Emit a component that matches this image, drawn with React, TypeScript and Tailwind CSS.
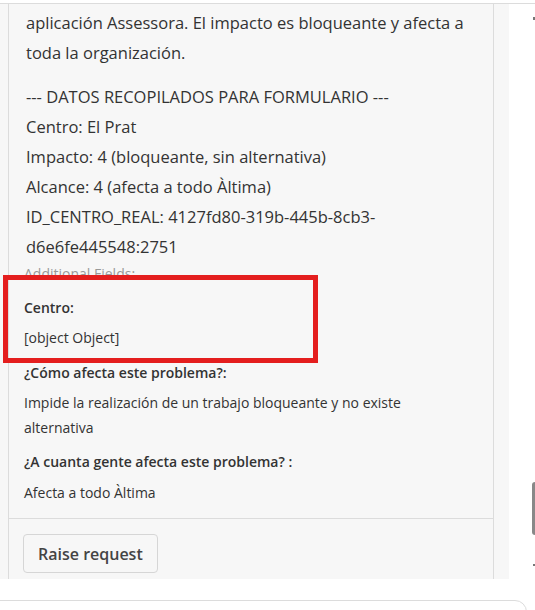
export default function App() {
  return (
    <div className="relative w-[535px] h-[610px] bg-white overflow-hidden flex flex-col font-['Open_Sans',sans-serif]">
      <div className="h-[3px] shrink-0" />
      <div className="flex h-[576px] shrink-0 border-t border-[#dcdcdc]">
        <div className="w-[509px] shrink-0 bg-[#f7f7f7] pl-2 overflow-hidden">
          <div className="w-[486px] border-x border-b border-[#dcdcdc] rounded-b-md">
            <div className="px-[17px] pt-1 text-[16.5px] leading-[30px] text-[#333] whitespace-nowrap">
              <p>
                aplicación Assessora. El impacto es bloqueante y afecta a
                <br />
                toda la organización.
              </p>
              <p className="mt-[14px]">
                --- DATOS RECOPILADOS PARA FORMULARIO ---
                <br />
                Centro: El Prat
                <br />
                Impacto: 4 (bloqueante, sin alternativa)
                <br />
                Alcance: 4 (afecta a todo Àltima)
                <br />
                ID_CENTRO_REAL: 4127fd80-319b-445b-8cb3-
                <br />
                d6e6fe445548:2751
              </p>
            </div>
            <div className="px-[15px] pb-[13px] text-[#333]">
              <div className="mt-[3px] text-[14px] leading-[18px] text-[#999]">Additional Fields:</div>
              <div className="mt-[15px]">
                <div className="text-[14px] leading-5 font-semibold">Centro:</div>
                <div className="mt-[7px] text-[14px] leading-[25px]">[object Object]</div>
              </div>
              <div className="mt-[13px]">
                <div className="text-[14px] leading-5 font-semibold">¿Cómo afecta este problema?:</div>
                <div className="mt-[7px] text-[14px] leading-[25px] whitespace-nowrap">
                  Impide la realización de un trabajo bloqueante y no existe
                  <br />
                  alternativa
                </div>
              </div>
              <div className="mt-[12px]">
                <div className="text-[14px] leading-5 font-semibold">¿A cuanta gente afecta este problema? :</div>
                <div className="mt-[8px] text-[14px] leading-[25px]">Afecta a todo Àltima</div>
              </div>
            </div>
            <div className="border-t border-[#dcdcdc] px-[14px] pt-[15px] pb-4">
              <button className="h-[39px] px-[14px] rounded border border-[#d6d6d6] bg-[#f7f7f7] text-[16px] font-semibold text-[#444]">
                Raise request
              </button>
            </div>
          </div>
        </div>
        <div className="flex-1 flex flex-col items-end">
          <div className="mt-[13px] w-[2px] h-[3px] bg-[#777]" />
          <div className="mt-[462px] w-[3px] h-[53px] bg-[#888] rounded-l-sm" />
          <div className="mt-[29px] w-[2px] h-[2px] bg-[#777]" />
        </div>
      </div>
      <div className="h-[21px] shrink-0" />
      <div className="-ml-3 w-[539px] h-[40px] shrink-0 border border-[#dcdcdc] rounded-xl bg-white" />
      <div className="absolute left-[3px] top-[275px] w-[315px] h-[88px] border-[5px] border-[#e41e1e]" />
    </div>
  );
}
